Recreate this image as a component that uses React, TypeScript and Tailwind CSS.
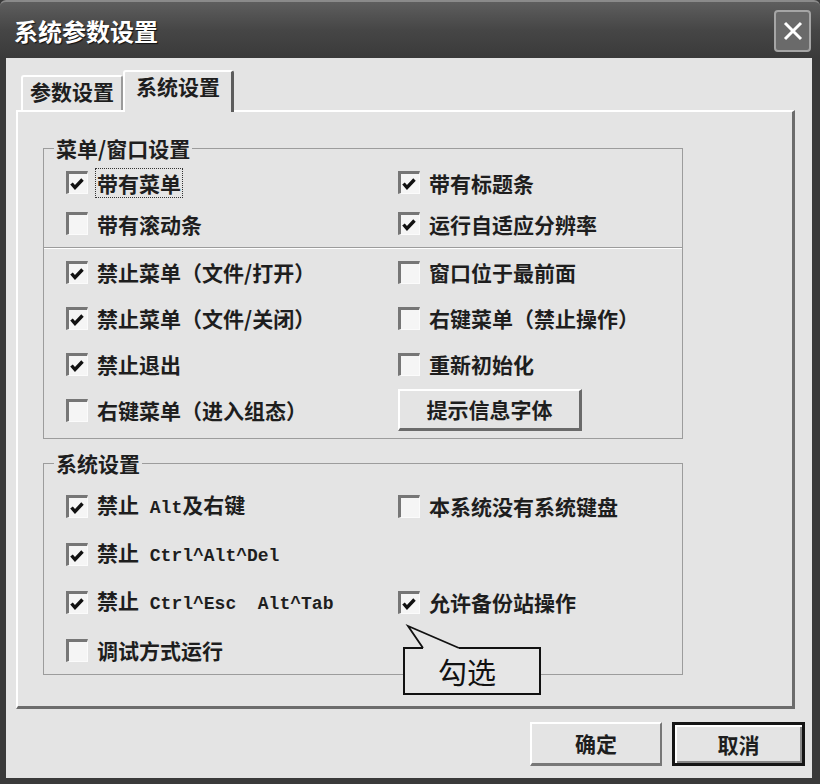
import React from "react";

const cn = "font-['Noto_Sans_CJK_SC','Noto_Sans_CJK_TC',sans-serif]";

// latin part of the key combos is printed in a bold courier-like face
const M = ({ children }: { children: React.ReactNode }) => (
  <span className="font-['Liberation_Mono',monospace] text-[18px] font-bold whitespace-pre">
    {children}
  </span>
);

const Check = ({ checked }: { checked?: boolean }) => (
  <span className="flex h-[23px] w-[22px] shrink-0 items-end justify-start border-t-[3px] border-l-[3px] border-r border-b border-t-[#767676] border-l-[#767676] border-r-[#fbfbfb] border-b-[#fbfbfb] bg-[#f5f5f5] pb-[3px] pl-[1px]">
    {checked && (
      <svg width="14" height="12" viewBox="0 0 14 12">
        <path d="M1.5 5.5 L5 9.5 L12.5 1.5" fill="none" stroke="#111" strokeWidth="3.4" />
      </svg>
    )}
  </span>
);

const Row = ({
  checked,
  focus,
  children,
}: {
  checked?: boolean;
  focus?: boolean;
  children: React.ReactNode;
}) => (
  <div className="flex items-center gap-[9px]">
    <Check checked={checked} />
    <span
      className={
        "whitespace-pre text-[21px] leading-[28px] font-bold text-[#1e1e1e] " +
        (focus ? "-ml-[2px] border border-dotted border-[#333] px-[1px]" : "")
      }
    >
      {children}
    </span>
  </div>
);

const Legend = ({ children }: { children: React.ReactNode }) => (
  <legend className="ml-[10px] px-[2px] text-[21px] leading-[28px] font-bold text-[#1e1e1e]">
    {children}
  </legend>
);

const Callout = () => (
  <>
    <div className="absolute left-[5px] top-[59px] z-10 flex h-[48px] w-[138px] items-center border-2 border-[#111] bg-[#e6e6e6] pl-[33px] text-[29px] leading-none font-normal text-[#111]">
      勾选
    </div>
    <svg
      className="absolute left-[7px] top-[33px] z-20"
      width="65"
      height="30"
      viewBox="0 0 65 30"
    >
      <polygon points="3,5 18,26 18,29 54,29 54,26" fill="#e6e6e6" />
      <path d="M18 27 L3 5 L54 27" fill="none" stroke="#111" strokeWidth="1.8" />
    </svg>
  </>
);

export default function App() {
  return (
    <div className={`flex h-[784px] w-[820px] flex-col bg-[#3a3a3a] ${cn}`}>
      {/* title bar */}
      <div className="flex h-[58px] items-start justify-between rounded-t-[6px] border-t-2 border-[#8a8a8a] bg-gradient-to-b from-[#5e5e5e] via-[#464646] to-[#3a3a3a] pl-[14px] pr-[9px]">
        <span className="mt-[14px] text-[24px] leading-[30px] font-bold text-white [text-shadow:1px_1px_1px_#111]">
          系统参数设置
        </span>
        <div className="mt-[8px] flex h-[42px] w-[37px] items-center justify-center rounded-[4px] border-2 border-[#a5a5a5] bg-[#6a6a6a]">
          <svg width="22" height="22" viewBox="0 0 22 22">
            <path d="M3 3 L19 19 M19 3 L3 19" stroke="#fff" strokeWidth="3" />
          </svg>
        </div>
      </div>

      {/* client area */}
      <div className="mb-[6px] ml-[6px] mr-[8px] flex flex-1 flex-col bg-[#e4e4e4] pt-[12px]">
        {/* tabs */}
        <div className="relative z-10 ml-[15px] flex h-[40px] items-end">
          <div className="flex h-[35px] w-[102px] items-start justify-center rounded-t-[3px] border-t-2 border-l-2 border-r-2 border-t-white border-l-white border-r-[#9a9a9a] text-[21px] leading-[28px] font-bold text-[#1e1e1e]">
            参数设置
          </div>
          <div className="-mb-[2px] flex h-[42px] w-[111px] items-start justify-center rounded-t-[3px] border-t-2 border-l-2 border-r-[3px] border-t-white border-l-white border-r-[#5c5c5c] bg-[#e4e4e4] pt-0 text-[21px] leading-[28px] font-bold text-[#1e1e1e]">
            系统设置
          </div>
        </div>

        {/* tab panel */}
        <div className="ml-[10px] mr-[17px] h-[599px] border-t-2 border-l-2 border-r-[3px] border-b-[3px] border-t-white border-l-white border-r-[#6c6c6c] border-b-[#6c6c6c] pt-[22px]">
          <fieldset className="ml-[25px] w-[640px] border border-[#9c9c9c]">
            <Legend>菜单/窗口设置</Legend>
            <div className="grid auto-rows-[41px] grid-cols-[332px_1fr] items-center px-[22px] pb-[3px]">
              <Row checked focus>
                带有菜单
              </Row>
              <Row checked>带有标题条</Row>
              <Row>带有滚动条</Row>
              <Row checked>运行自适应分辨率</Row>
            </div>
            <div className="grid auto-rows-[46px] grid-cols-[332px_1fr] items-center border-t border-[#9c9c9c] px-[22px] pt-[1px] pb-[5px] shadow-[inset_0_1px_0_#fff]">
              <Row checked>禁止菜单（文件/打开）</Row>
              <Row>窗口位于最前面</Row>
              <Row checked>禁止菜单（文件/关闭）</Row>
              <Row>右键菜单（禁止操作）</Row>
              <Row checked>禁止退出</Row>
              <Row>重新初始化</Row>
              <Row>右键菜单（进入组态）</Row>
              <div className="flex h-[42px] w-[184px] items-center justify-center border-t-2 border-l-2 border-r-[3px] border-b-[3px] border-t-white border-l-white border-r-[#6a6a6a] border-b-[#6a6a6a] text-[21px] leading-none font-bold text-[#1e1e1e]">
                提示信息字体
              </div>
            </div>
          </fieldset>

          <fieldset className="mt-[10px] ml-[25px] w-[640px] border border-[#9c9c9c]">
            <Legend>系统设置</Legend>
            <div className="grid auto-rows-[48px] grid-cols-[332px_1fr] items-center px-[22px] pt-[5px]">
              <Row checked>
                禁止<M> Alt</M>及右键
              </Row>
              <Row>本系统没有系统键盘</Row>
              <Row checked>
                禁止<M> Ctrl^Alt^Del</M>
              </Row>
              <div />
              <Row checked>
                禁止<M> Ctrl^Esc  Alt^Tab</M>
              </Row>
              <div className="relative">
                <Row checked>允许备份站操作</Row>
                <Callout />
              </div>
              <Row>调试方式运行</Row>
              <div />
            </div>
          </fieldset>
        </div>

        {/* dialog buttons */}
        <div className="mt-[13px] flex justify-end gap-[10px] pr-[7px]">
          <button className="flex h-[44px] w-[132px] items-center justify-center border-t-2 border-l-2 border-r-2 border-b-[3px] border-t-white border-l-white border-r-[#777] border-b-[#777] bg-[#e4e4e4] text-[21px] leading-none font-bold text-[#1e1e1e]">
            确定
          </button>
          <button className="flex h-[44px] w-[133px] items-center justify-center border-[3px] border-[#151515] bg-[#e4e4e4] text-[21px] leading-none font-bold text-[#1e1e1e] shadow-[inset_2px_2px_0_#fff,inset_-2px_-2px_0_#888]">
            取消
          </button>
        </div>
      </div>
    </div>
  );
}
